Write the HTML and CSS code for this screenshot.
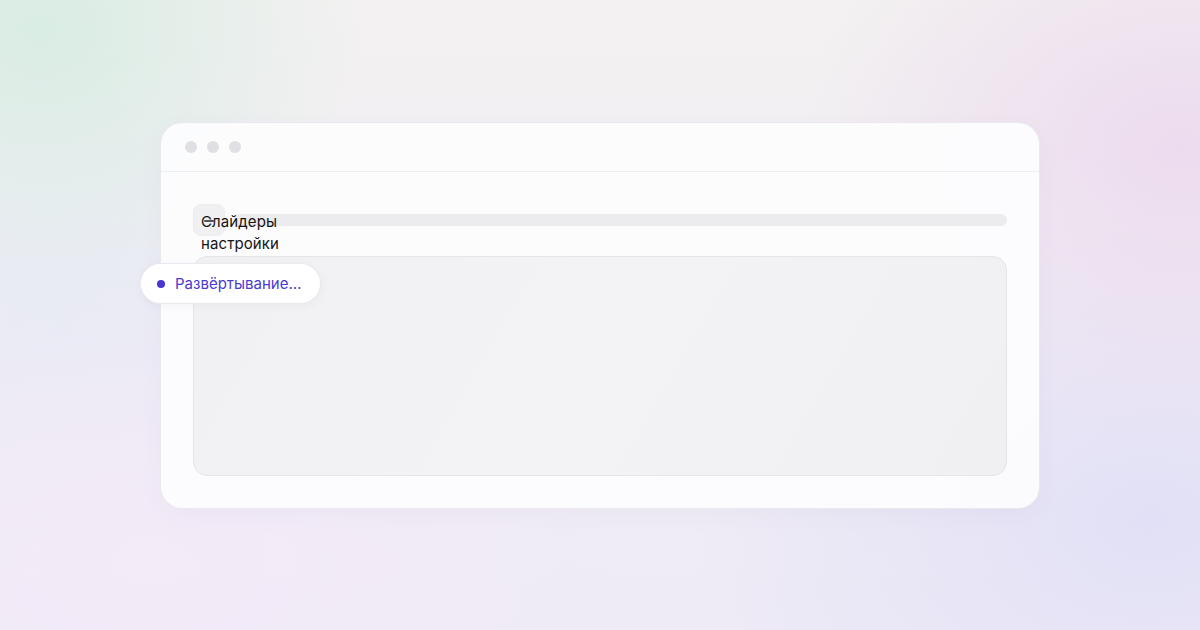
FILE: index.html
```html
<!DOCTYPE html>
<html lang="ru">
<head>
<meta charset="utf-8">
<title>Слайдеры настройки</title>
<link rel="stylesheet" href="styles.css">
</head>
<body>
<main class="stage">
  <section class="window">
    <header class="titlebar">
      <span class="dot"></span>
      <span class="dot"></span>
      <span class="dot"></span>
    </header>
    <div class="content">
      <div class="head-row">
        <div class="icon-box"><span class="icon-dash"></span></div>
        <div class="bar"></div>
        <h1 class="title">Слайдеры настройки</h1>
      </div>
      <div class="panel"></div>
    </div>
    <div class="status-pill">
      <span class="status-dot"></span>
      <span class="status-text">Развёртывание…</span>
    </div>
  </section>
</main>
</body>
</html>
```

FILE: styles.css
```css
* { box-sizing: border-box; }
html, body {
  margin: 0;
  width: 1200px;
  height: 630px;
  overflow: hidden;
}
body {
  font-family: Inter, "Noto Sans", "Liberation Sans", sans-serif;
  background:
    radial-gradient(ellipse 320px 260px at 40px 30px, rgba(214, 236, 226, 0.9), rgba(214, 236, 226, 0) 100%),
    radial-gradient(ellipse 380px 300px at 1180px 150px, rgba(236, 218, 238, 0.95), rgba(236, 218, 238, 0) 100%),
    radial-gradient(ellipse 460px 320px at 1150px 520px, rgba(226, 224, 246, 1), rgba(226, 224, 246, 0) 100%),
    radial-gradient(ellipse 480px 280px at 150px 560px, rgba(244, 234, 248, 1), rgba(244, 234, 248, 0) 100%),
    radial-gradient(ellipse 400px 260px at 60px 330px, rgba(230, 234, 244, 0.9), rgba(230, 234, 244, 0) 100%),
    linear-gradient(180deg, #f3f1f1 0%, #f1eef4 50%, #eeebf6 100%);
}
.stage {
  width: 1200px;
  height: 630px;
  display: flex;
  justify-content: center;
  padding-top: 122px;
}
.window {
  position: relative;
  width: 880px;
  height: 387px;
  background: rgba(253, 253, 254, 0.92);
  border: 1px solid rgba(225, 222, 232, 0.7);
  border-radius: 22px;
  box-shadow: 0 6px 24px rgba(90, 80, 130, 0.04);
}
.titlebar {
  height: 49px;
  display: flex;
  align-items: center;
  gap: 10px;
  padding: 0 0 0 24px;
  border-bottom: 1px solid #eeeef1;
}
.dot {
  width: 12px;
  height: 12px;
  border-radius: 50%;
  background: #dfdfe4;
}
.content {
  padding: 32px;
}
.head-row {
  position: relative;
  display: flex;
  align-items: center;
  gap: 8px;
  height: 32px;
}
.icon-box {
  width: 32px;
  height: 32px;
  flex: none;
  border-radius: 8px;
  background: #f0f0f2;
  border: 1px solid #ececef;
  display: flex;
  align-items: center;
  justify-content: center;
}
.icon-dash {
  width: 10px;
  height: 1.5px;
  margin-top: 2px;
  background: #555;
  border-radius: 1px;
}
.bar {
  flex: 1;
  height: 12px;
  border-radius: 6px;
  background: #ececee;
}
.title {
  position: absolute;
  left: 8px;
  top: 7px;
  width: 90px;
  margin: 0;
  font-size: 15px;
  line-height: 22px;
  font-weight: 400;
  letter-spacing: 0.1px;
  color: #141414;
}
.panel {
  margin-top: 20px;
  height: 220px;
  border-radius: 14px;
  background: linear-gradient(120deg, #f1f1f3 0%, #f3f3f5 50%, #f0f0f3 100%);
  border: 1px solid #e5e5e9;
}
.status-pill {
  position: absolute;
  left: -21px;
  top: 140px;
  height: 41px;
  display: flex;
  align-items: center;
  gap: 10px;
  padding: 0 19px 0 16px;
  background: #ffffff;
  border-radius: 21px;
  border: 1px solid rgba(230, 228, 236, 0.8);
  box-shadow: 0 2px 8px rgba(70, 60, 120, 0.05);
}
.status-dot {
  width: 8px;
  height: 8px;
  border-radius: 50%;
  background: #4836d0;
}
.status-text {
  font-size: 15px;
  line-height: 20px;
  color: #4a3bd0;
}
```
